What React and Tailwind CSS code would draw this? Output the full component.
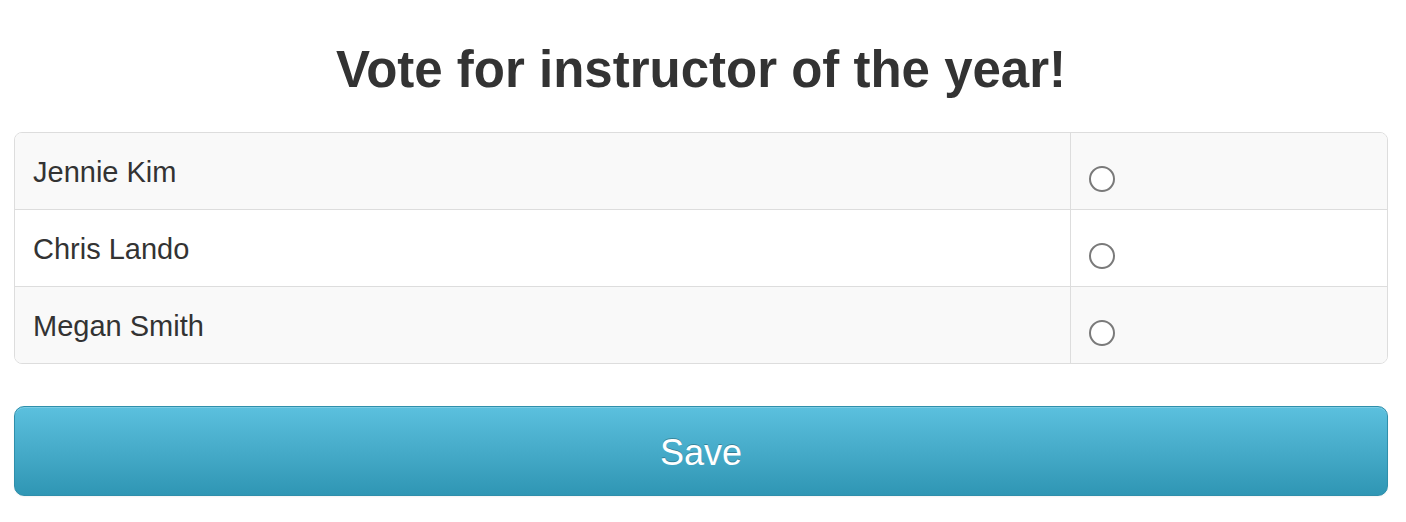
export default function App() {
  const names = ["Jennie Kim", "Chris Lando", "Megan Smith"];
  return (
    <div
      className="w-[1406px] h-[522px] bg-white pl-[14px] pr-[18px] text-[#333]"
      style={{ fontFamily: '"Liberation Sans", Arial, sans-serif' }}
    >
      <h1 className="pt-[40px] h-[100px] text-center text-[51px] leading-[60px] font-bold mb-[32px]">
        Vote for instructor of the year!
      </h1>
      <div className="border border-[#ddd] rounded-[8px] overflow-hidden">
        {names.map((n, i) => (
          <div
            key={n}
            className={`flex ${i > 0 ? "border-t border-[#ddd]" : ""} ${i % 2 === 0 ? "bg-[#f9f9f9]" : "bg-white"}`}
          >
            <div className="flex-1 px-[18px] pt-[19px] pb-[17px] text-[29px] leading-[40px]">{n}</div>
            <div className="w-[317px] border-l border-[#ddd] pl-[18px] pt-[33px] h-[76px]">
              <input
                type="radio"
                name="vote"
                className="appearance-none block w-[26px] h-[26px] rounded-full border-2 border-[#7a7a7a] bg-white m-0"
              />
            </div>
          </div>
        ))}
      </div>
      <button className="mt-[42px] w-full h-[90px] pt-[4px] rounded-[10px] border border-[#2f8fab] bg-gradient-to-b from-[#5bc0de] to-[#2f96b4] text-white text-[36px] leading-none [text-shadow:0_-1px_0_rgba(0,0,0,0.25)] shadow-[inset_0_1px_0_rgba(255,255,255,0.2),0_1px_2px_rgba(0,0,0,0.05)]">
        Save
      </button>
    </div>
  );
}
